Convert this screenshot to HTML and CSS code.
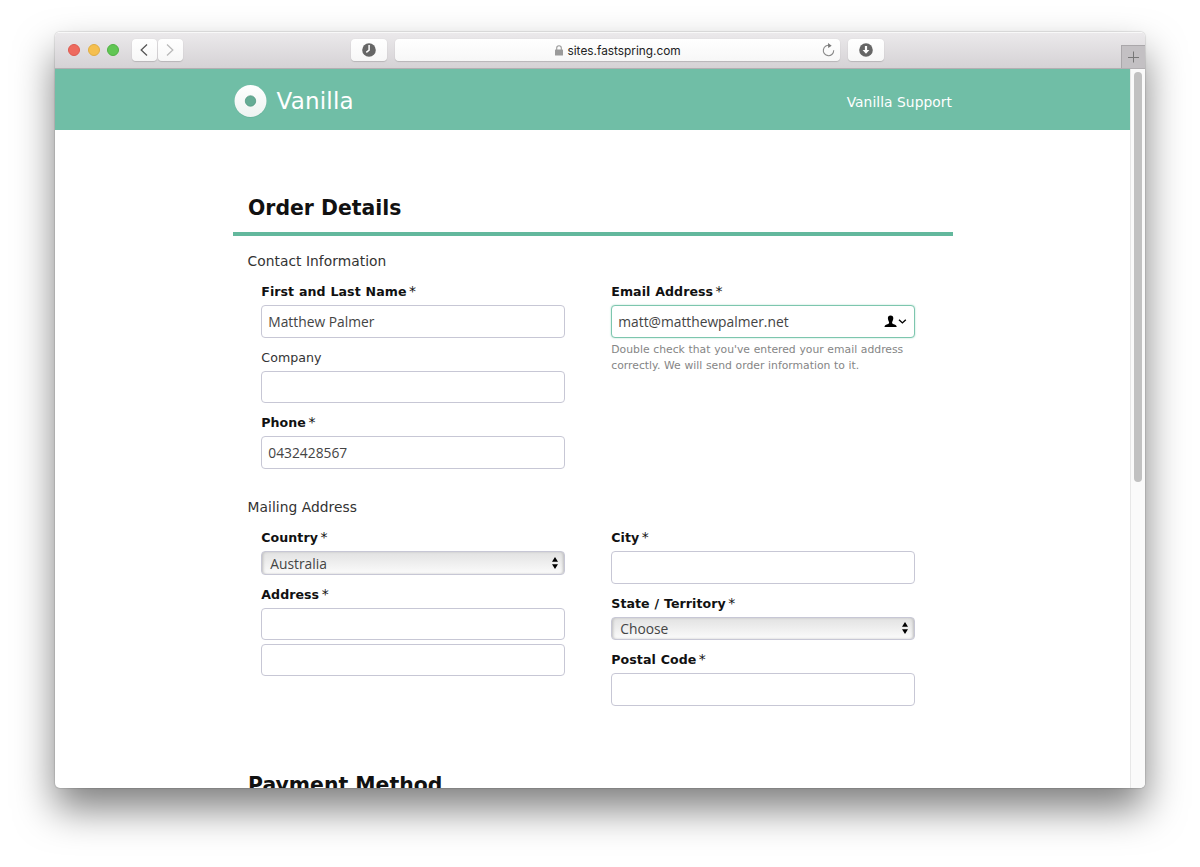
FILE: index.html
```html
<!DOCTYPE html>
<html lang="en">
<head>
<meta charset="utf-8">
<title>Order Details</title>
<link rel="stylesheet" href="styles.css">
</head>
<body>
<div class="window">
  <div class="toolbar">
    <div class="lights"><span class="light red"></span><span class="light yellow"></span><span class="light green"></span></div>
    <div class="nav">
      <span class="btn nav-btn"><svg width="10" height="14" viewBox="0 0 10 14" fill="none" stroke="#555" stroke-width="1.3"><path d="M8 1.5 2.2 7 8 12.5"/></svg></span>
      <span class="btn nav-btn"><svg width="10" height="14" viewBox="0 0 10 14" fill="none" stroke="#b9b9b9" stroke-width="1.3"><path d="M2 1.5 7.8 7 2 12.5"/></svg></span>
    </div>
    <span class="btn tool history"><svg width="14" height="14" viewBox="0 0 14 14"><circle cx="7" cy="7" r="6.8" fill="#666"/><path d="M7.1 2v5.2L4.3 9.3" fill="none" stroke="#fff" stroke-width="1.5"/></svg></span>
    <div class="btn url">
      <div class="site"><svg width="8" height="11" viewBox="0 0 8 11"><rect y="4.6" width="8" height="6" rx=".6" fill="#9a9a9a"/><path d="M1.7 5V3.1a2.3 2.3 0 0 1 4.6 0V5" fill="none" stroke="#9a9a9a" stroke-width="1.1"/></svg><span class="host">sites.fastspring.com</span></div>
      <svg class="reload" width="13" height="14" viewBox="0 0 13 14"><path d="M8 2.500A5.200 5.200 0 1 0 11.700 7.300" fill="none" stroke="#8a8a8a" stroke-width="1.100"/><path d="M6 0 9.700 2.700 6.200 5.100Z" fill="#777"/></svg>
    </div>
    <span class="btn tool download"><svg width="14" height="14" viewBox="0 0 14 14"><circle cx="7" cy="7" r="6.8" fill="#666"/><path d="M5.9 3h2.2v4h2.3L7 10.8 3.6 7h2.3Z" fill="#fff"/></svg></span>
    <span class="newtab"><svg width="12" height="12" viewBox="0 0 12 12" stroke="#777" stroke-width="1"><path d="M5.500 .5v11M0 6.500h11"/></svg></span>
  </div>
  <div class="view">
    <div class="page">
      <header class="site-header">
        <div class="brand"><svg width="34" height="34" viewBox="0 0 34 34"><defs><linearGradient id="disc" x1="0" y1="0" x2="0" y2="1"><stop offset="0" stop-color="#fff"/><stop offset="1" stop-color="#edf3f1"/></linearGradient></defs><circle cx="17.500" cy="17.500" r="16.200" fill="#57a58b" opacity=".45"/><circle cx="17.500" cy="17" r="16" fill="url(#disc)"/><circle cx="17.500" cy="17" r="5.200" fill="#65ac95" stroke="#569b84" stroke-width=".8"/></svg><span>Vanilla</span></div>
        <span class="support">Vanilla Support</span>
      </header>
      <main class="order">
        <h1 class="title">Order Details</h1>
        <h2 class="section">Contact Information</h2>
        <div class="columns contact">
          <div class="col">
            <label class="label">First and Last Name<i>*</i></label>
            <div class="input">Matthew Palmer</div>
            <label class="label optional">Company</label>
            <div class="input"></div>
            <label class="label">Phone<i>*</i></label>
            <div class="input">0432428567</div>
          </div>
          <div class="col">
            <label class="label">Email Address<i>*</i></label>
            <div class="input focused"><span>matt@matthewpalmer.net</span><svg width="24" height="13" viewBox="0 0 24 13"><path d="M7.600.4C9.500.4 10.400 1.700 10.300 3.400 10.200 5 9.500 6.200 9.100 6.900c0 1.400.3 1.800 1.800 2.300 1.800.6 2.700 1 2.800 2.800H1.500c.1-1.800 1-2.200 2.800-2.800 1.500-.5 1.800-.9 1.800-2.300-.4-.7-1.100-1.900-1.200-3.500C4.800 1.700 5.700.4 7.600.4Z"/><path d="m16 4.700 3.400 3.200 3.400-3.200" fill="none" stroke="#000" stroke-width="1.400"/></svg></div>
            <p class="help">Double check that you've entered your email address<br>correctly. We will send order information to it.</p>
          </div>
        </div>
        <h2 class="section">Mailing Address</h2>
        <div class="columns mailing">
          <div class="col">
            <label class="label">Country<i>*</i></label>
            <div class="select"><span>Australia</span><svg width="6" height="12" viewBox="0 0 6 12"><path d="M3 0 6 4.800H0ZM3 12 0 7.200h6Z"/></svg></div>
            <label class="label">Address<i>*</i></label>
            <div class="input line-one"></div>
            <div class="input"></div>
          </div>
          <div class="col">
            <label class="label">City<i>*</i></label>
            <div class="input"></div>
            <label class="label">State / Territory<i>*</i></label>
            <div class="select"><span>Choose</span><svg width="6" height="12" viewBox="0 0 6 12"><path d="M3 0 6 4.800H0ZM3 12 0 7.200h6Z"/></svg></div>
            <label class="label">Postal Code<i>*</i></label>
            <div class="input"></div>
          </div>
        </div>
        <h1 class="title">Payment Method</h1>
      </main>
    </div>
    <div class="scrollbar"><div class="thumb"></div></div>
  </div>
</div>
</body>
</html>
```
FILE: styles.css
```css
* { box-sizing: border-box; }
body { margin: 0; height: 867px; padding: 32px 55px 0; overflow: hidden; background: #fff; font-family: "DejaVu Sans", sans-serif; color: #333; }
svg { display: block; flex: none; }
.window { display: flex; flex-direction: column; width: 1090px; height: 756px; border-radius: 5px; overflow: hidden; background: #fff; box-shadow: 0 0 1px 1px rgba(0,0,0,.1), 0 21px 39px rgba(0,0,0,.5); }

/* Browser toolbar */
.toolbar { display: flex; align-items: center; flex: none; height: 37px; padding: 0 0 1px 13px; background: linear-gradient(#ebe9eb, #d5d2d5); border-top: 1px solid #f8f8f8; border-bottom: 1px solid #b2afb2; }
.lights { display: flex; gap: 7.700px; }
.light { width: 12px; height: 12px; border-radius: 50%; }
.red { background: #ee6a5f; border: 1px solid #de5a50; }
.yellow { background: #f5bf4f; border: 1px solid #e0ad42; }
.green { background: #61c654; border: 1px solid #50b244; }
.nav { display: flex; gap: 1px; margin-left: 12.500px; }
.btn { display: flex; align-items: center; justify-content: center; height: 21.500px; border-radius: 4px; background: linear-gradient(#fff, #f7f7f7); box-shadow: 0 1px 1px rgba(0,0,0,.14), 0 0 1px rgba(0,0,0,.12); }
.nav-btn { width: 25px; }
.tool { width: 36px; }
.history { margin-left: 168.500px; }
.url { width: 445px; margin: 0 8px; padding-right: 5.500px; }
.reload { margin-bottom: 1px; }
.site { display: flex; flex: 1; align-items: center; justify-content: center; gap: 5px; padding-left: 18px; font: 11.850px Inter, sans-serif; color: #222; }
.host { padding-top: 2px; }
.newtab { display: flex; align-items: center; justify-content: center; align-self: flex-end; width: 24px; height: 23px; margin: 0 0 -1px auto; background: #c3c0c3; border: solid #aaa7aa; border-width: 1px 0 0 1px; }

/* Viewport */
.view { display: flex; flex: 1; min-height: 0; }
.page { flex: 1; overflow: hidden; }
.scrollbar { width: 15px; padding: 3px 3px 0 3px; border-left: 1px solid #e7e7e7; background: #fafafa; }
.thumb { width: 8px; height: 409.500px; border-radius: 4px; background: #c1c1c1; }
.site-header { display: flex; justify-content: space-between; align-items: center; height: 61px; padding: 2px 178px 0 178px; background: #70bea6; color: #fff; }
.brand { display: flex; align-items: center; gap: 9.500px; font-size: 23px; letter-spacing: .2px; }
.support { padding-top: 2px; font-size: 13.800px; letter-spacing: .06px; }

/* Order form */
.order { width: 719.500px; margin-left: 178px; padding-top: 62px; }
.title { height: 44px; margin: 0; padding-left: 15px; border-bottom: 4px solid #63b89d; font-size: 20.400px; line-height: 32px; color: #111; }
.section { height: 20px; margin: 0 0 10.700px; padding-left: 14.600px; font-size: 13.800px; line-height: 20px; font-weight: 400; letter-spacing: .04px; }
.title + .section { margin-top: 15px; }
.columns { display: grid; grid-template-columns: 304px 304px; column-gap: 46px; padding-left: 28.300px; }
.contact { height: 215.400px; }
.mailing { height: 241.600px; }
.label { display: block; height: 20px; margin-bottom: 3.600px; padding-top: .6px; font-size: 12.600px; line-height: 20px; font-weight: 700; color: #111; letter-spacing: .05px; word-spacing: .4px; }
.label i { margin-left: 2.500px; font-size: 14px; line-height: 1; font-style: normal; font-weight: 400; }
.optional { font-weight: 400; color: #333; }
.input { display: flex; align-items: center; justify-content: space-between; height: 32.300px; margin-bottom: 9.600px; padding: 0 7px 0 6px; border: 1px solid #c7c7d5; border-radius: 4px; background: #fff; font: 13.800px "Open Sans", sans-serif; color: #444; }
.focused { border: 1.500px solid #7dc6ae; box-shadow: 0 0 2px #a9dccb; margin-bottom: 4.600px; }
.line-one { margin-bottom: 3.600px; }
.help { margin: 0; font-size: 10.800px; line-height: 16px; color: #858585; word-spacing: .25px; }
.select { display: flex; align-items: center; justify-content: space-between; height: 23.300px; margin-bottom: 9.600px; padding: 0 6px 0 8px; border: 1px solid #c7c7d5; border-radius: 4px; background: linear-gradient(#e2e2e2, #fbfbfb); box-shadow: inset 2px 0 3px -1px #bbb, inset -2px 0 3px -1px #bbb; font: 13.800px "Open Sans", sans-serif; color: #444; }
.select svg { fill: #000; }
```
